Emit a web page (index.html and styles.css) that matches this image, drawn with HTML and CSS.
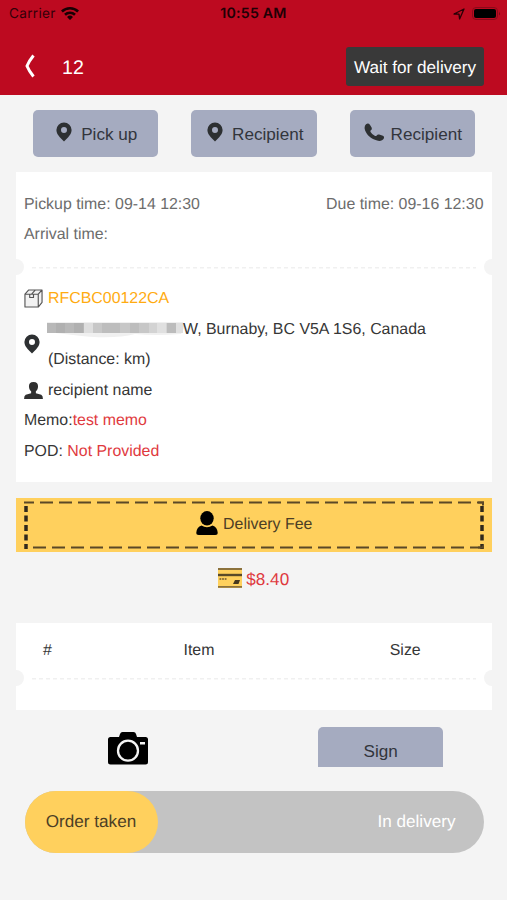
FILE: index.html
```html
<!DOCTYPE html>
<html lang="en">
<head>
<meta charset="utf-8">
<meta name="viewport" content="width=device-width">
<title>Delivery order</title>
<link rel="stylesheet" href="styles.css">
</head>
<body>
<svg class="defs" aria-hidden="true">
  <symbol id="pin" viewBox="0 0 16 20"><path fill-rule="evenodd" d="M8 .5a7.6 7.6 0 0 0-7.6 7.6c0 3 1.6 5 3.4 7.2L8 19.5l4.200-4.200c1.800-2.200 3.400-4.200 3.400-7.200A7.600 7.600 0 0 0 8 .5zm0 4.600a3 3 0 1 1 0 6 3 3 0 0 1 0-6z"/></symbol>
</svg>
<header class="top">
  <div class="status">
    <div class="carrier">Carrier
      <svg class="wifi" viewBox="0 0 18 14"><path d="M0 4.500A13 13 0 0 1 18 4.500L16.200 6.500A10.300 10.300 0 0 0 1.800 6.500zM3.100 7.800A8.600 8.600 0 0 1 14.900 7.800L13.100 9.700A6 6 0 0 0 4.900 9.700zM6 11A4.400 4.400 0 0 1 12 11L9 14z"/></svg>
    </div>
    <div class="clock">10:55 AM</div>
    <div class="indicators">
      <svg class="location" viewBox="0 0 12 12"><path d="M1 6L11 1 6.600 11 6 6.100z" fill="none" stroke="#280006" stroke-width="1.300" stroke-linejoin="round"/></svg>
      <svg class="battery" viewBox="0 0 29 13"><rect x=".5" y=".5" width="25" height="12" rx="3.500" fill="none" stroke="#8a0a1a"/><rect x="2" y="2" width="22" height="9" rx="2"/><path d="M27 4.500q1.800 2 0 4z" fill="#740818"/></svg>
    </div>
  </div>
  <div class="navbar">
    <svg class="back" viewBox="0 0 12 24"><path d="M9.500 1.500Q5 7 3 12q2 5 6.500 10.500" fill="none" stroke="#fff" stroke-width="3"/></svg>
    <span class="order-no">12</span>
    <span class="state">Wait for delivery</span>
  </div>
</header>
<main>
  <nav class="actions">
    <button class="btn"><svg class="pin"><use href="#pin"/></svg>Pick up</button>
    <button class="btn"><svg class="pin"><use href="#pin"/></svg>Recipient</button>
    <button class="btn"><svg class="phone" viewBox="0 0 20 19"><path d="M2 1.300Q4.300-.7 5.900 1.800L7.600 4.600Q8.300 6.500 6.800 7.300q-.8.700 0 2 1.500 2.500 3.900 3.500 1.200.6 2-.4 1-1.400 2.500-.8l3.700 1.100q1.700.8.900 2.800c-1.400 3-5.700 2.900-8.900 1.300C5.800 15 1.700 10.500.7 6Q.2 3 2 1.300z"/></svg>Recipient</button>
  </nav>
  <section class="card order">
    <div class="times">
      <div class="split"><span>Pickup time: 09-14 12:30</span><span>Due time: 09-16 12:30</span></div>
      <div>Arrival time:</div>
    </div>
    <div class="perforation"></div>
    <div class="details">
      <div class="line tracking">
        <svg class="box" viewBox="0 0 20 20"><path d="M1 5.500L5 1h14v13l-4 5H1zM1 5.500h14V19M15 5.500L19 1M8 5.500L12 1M6 5.500v3.500h4V5.500" fill="#f2f2f2" stroke="#555" stroke-width="1.200" stroke-linejoin="round"/></svg>
        <span>RFCBC00122CA</span>
      </div>
      <div class="line address">
        <svg class="pin"><use href="#pin"/></svg>
        <div>
          <div class="street"><svg class="redaction" viewBox="0 0 138 20"><path d="M0 4H136L138 8 134 16Q108 18 88 16 65 22 26 17L0 14z" fill="#f0f0f0"/><path d="M0 5h37v10H0z" fill="#b8b8b8"/><path d="M9 5h9v10H9zM27 5h9v10h-9z" fill="#b0b0b0"/><path d="M37 5h9v10h-9z" fill="#dedede"/><path d="M46 5h56v10H46z" fill="#c7c7c7"/><path d="M55 5h18v10H55zM83 5h9v10h-9z" fill="#bdbdbd"/><path d="M102 5h18v10h-18z" fill="#d3d3d3"/><path d="M110 5h9v10h-9z" fill="#e0e0e0"/><path d="M120 5h9v10h-9z" fill="#bcbcbc"/><path d="M129 5h7v10h-7z" fill="#e0e0e0"/></svg><span>W, Burnaby, BC V5A 1S6, Canada</span></div>
          <div class="distance">(Distance: km)</div>
        </div>
      </div>
      <div class="line">
        <svg class="person" viewBox="0 0 20 18"><path d="M10 0C6.500 0 5 2 5.200 5c.2 2.300 1 3.700 2.300 4.800v2L1.800 13.600Q0 14.500 0 18h20q0-3.500-1.800-4.400l-5.700-1.800v-2c1.300-1.100 2.100-2.500 2.300-4.800C15 2 13.500 0 10 0z"/></svg>
        <span>recipient name</span>
      </div>
      <div class="line">Memo:<span class="alert">test memo</span></div>
      <div class="line">POD:&nbsp;<span class="alert">Not Provided</span></div>
    </div>
  </section>
  <section class="fee">
    <svg class="fee-frame" viewBox="0 0 460 48"><g fill="none" stroke="#5b4827"><path d="M0 1.500H460" stroke-width="2" stroke-dasharray="13 6" stroke-dashoffset="3"/><path d="M9 46.500H460" stroke-width="2" stroke-dasharray="13 6"/><path d="M2 5V48M458 5V48" stroke="#30291c" stroke-width="3.500" stroke-dasharray="6 3.500"/><path d="M454 1.500h5v3M454 46.500h5v-2" stroke-width="2"/></g></svg>
    <svg class="user" viewBox="0 0 22 25"><ellipse cx="11" cy="7.300" rx="6.700" ry="7.300"/><path d="M5.500 14.500Q11 17.800 16.500 14.500q4.700 1.500 5.200 7 .2 2.500-2.500 2.500H2.800Q.1 24 .3 21.500.8 16 5.500 14.500z"/></svg>
    <span>Delivery Fee</span>
  </section>
  <div class="price">
    <svg class="credit" viewBox="0 0 24 20"><path fill="#ffd15d" d="M0 0h24v20H0z"/><path d="M0 1h24M0 18.800h24" stroke="#8c723c" stroke-width="1.800"/><path d="M0 7h24" stroke="#594a28" stroke-width="2.400"/><path d="M1.500 11h7" stroke="#6b5730" stroke-width="1.500" stroke-dasharray="1.800 .8"/><path d="M17 12h5l-1.500 4H15z" fill="#47391e"/></svg>
    <span>$8.40</span>
  </div>
  <section class="card items">
    <div class="columns"><span>#</span><span>Item</span><span>Size</span></div>
    <div class="perforation"></div>
  </section>
  <div class="proof">
    <svg class="camera" viewBox="0 0 40 33"><path d="M2.500 5H11l1-3q.7-2 2.500-2h11q2 0 2.500 2l1 3h8.500Q40 5 40 7.500v22.500q0 2.500-2.500 2.500h-35Q0 32.500 0 30V7.500Q0 5 2.500 5z"/><circle cx="20" cy="18.700" r="10" fill="none" stroke="#f4f4f4" stroke-width="2.300"/><path fill="#f4f4f4" d="M32 10h5v2.500h-5z"/></svg>
    <button class="btn sign">Sign</button>
  </div>
  <div class="slider"><div class="thumb">Order taken</div><span>In delivery</span></div>
</main>
</body>
</html>
```
FILE: styles.css
```css
* { box-sizing: border-box; }
body {
  margin: 0;
  min-height: 900px;
  background: #f4f4f4;
  color: #363636;
  font: 15.92px/30.6px "Liberation Sans", Arial, sans-serif;
  text-rendering: geometricPrecision;
}
svg { display: block; flex: none; }
.defs { display: none; }
.top { height: 94.500px; background: #bd0a20; }
.status {
  display: grid;
  grid-template-columns: 1fr auto 1fr;
  align-items: center;
  height: 28px;
  padding: 0 6px 0 9px;
  font: 13.600px/28px Inter, sans-serif;
  color: #330008;
}
.carrier { display: flex; align-items: center; gap: 5.500px; letter-spacing: .3px; }
.wifi { width: 18px; height: 14px; margin-top: -2px; fill: #180003; }
.clock { font-weight: 600; font-size: 14.200px; letter-spacing: .2px; color: #200005; margin-right: 3px; }
.indicators { display: flex; justify-content: flex-end; align-items: center; gap: 7px; margin-top: -1px; }
.location { width: 12px; height: 12px; }
.battery { width: 29px; height: 13px; }
.navbar { display: flex; align-items: center; height: 78px; padding: 12px 23px 0 24px; margin-top: -7px; color: #fff; }
.back { width: 12px; height: 24px; }
.order-no { margin-left: 26px; font-size: 19.600px; padding-top: 4px; }
.state {
  display: flex;
  align-items: center;
  justify-content: center;
  margin-left: auto;
  width: 138px;
  height: 39px;
  border-radius: 3px;
  background: #393939;
  font-size: 17.140px;
  padding-top: 2px;
}
main { padding: 0 15.500px 0 16px; }
.actions { display: flex; justify-content: space-around; padding: 15.500px 0 15px; }
.btn {
  display: flex;
  align-items: center;
  justify-content: center;
  gap: 9px;
  width: 125.500px;
  height: 47px;
  padding: 1px 0 0;
  border: 0;
  border-radius: 5px;
  background: #a5abc0;
  color: #32353c;
  font: 17.140px "Liberation Sans", Arial, sans-serif;
}
.actions .btn { padding-left: 3px; }
.actions .btn:last-child { padding-left: 1px; }
.pin { width: 16px; height: 20px; fill: #2d3032; }
.btn .pin { margin-top: -4px; }
.phone { width: 20px; height: 19px; fill: #2d3032; margin-top: -4px; margin-right: -2px; }
.card { background: #fff; }
.order { height: 310px; }
.times { height: 87px; padding: 17.500px 8px 0; color: #6c6c6c; }
.split { display: flex; justify-content: space-between; }
.perforation {
  display: flex;
  align-items: center;
  justify-content: space-between;
  height: 16px;
  overflow: hidden;
  background: repeating-linear-gradient(90deg, #f0f0f0 0 4px, #fff 4px 7px) 16px 8px / calc(100% - 32px) 1.500px no-repeat;
}
.perforation::before, .perforation::after {
  content: "";
  width: 16px;
  height: 16px;
  border-radius: 50%;
  background: #f4f4f4;
}
.perforation::before { margin-left: -8px; }
.perforation::after { margin-right: -8px; }
.details { padding: 9px 8px 0; }
.line { display: flex; align-items: center; min-height: 30.600px; }
.box { width: 19px; height: 19px; margin: -1px 5px 0 0; }
.tracking { color: #ffab10; }
.address .pin { margin: -2px 7px 0 0; }
.street { display: flex; }
.distance { padding-left: 1px; }
.redaction { width: 138px; height: 20px; margin: 3px -2px 0 0; }
.person { width: 19px; height: 17px; margin: -1px 5px 0 0; fill: #303030; }
.alert { color: #df3a3e; }
.fee {
  position: relative;
  display: flex;
  align-items: center;
  justify-content: center;
  gap: 5px;
  height: 54.500px;
  margin-top: 15.500px;
  padding: 2px 0 0 1px;
  background: #ffd05d;
  color: #4c3e25;
}
.fee-frame { position: absolute; left: 8px; top: 3.500px; width: 460px; height: 48px; }
.user { width: 22px; height: 25px; margin-top: -4px; }
.price {
  display: flex;
  align-items: center;
  justify-content: center;
  gap: 4px;
  height: 55px;
  color: #df3a3e;
  font-size: 17.140px;
}
.credit { width: 24px; height: 20px; margin-top: -3px; }
.items { height: 87px; margin-top: 16px; }
.columns { display: grid; grid-template-columns: 63px 240px 1fr; height: 47px; padding-top: 13px; text-align: center; }
.proof { display: grid; grid-template-columns: 1fr 1fr; justify-items: center; height: 56.500px; padding: 17px 0 0; overflow: hidden; }
.camera { width: 40px; height: 33px; margin: 5px 0 0 -13px; }
.sign { margin-left: 16px; }
.slider {
  display: flex;
  align-items: center;
  justify-content: space-between;
  height: 62.500px;
  margin: 24px 8px 0 8.500px;
  padding-right: 28px;
  border-radius: 32px;
  background: #c3c3c3;
  color: #fff;
  font-size: 17.140px;
}
.slider span { margin-top: -1px; }
.thumb { width: 133px; height: 100%; border-radius: 32px; background: #ffd05d; color: #4c3e25; text-align: center; line-height: 61px; }
```
